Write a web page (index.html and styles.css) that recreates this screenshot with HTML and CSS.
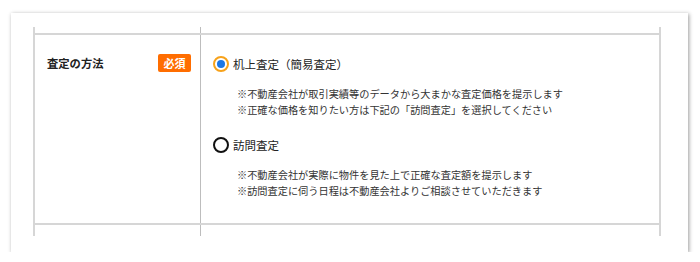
FILE: index.html
```html
<!DOCTYPE html>
<html lang="ja">
<head>
<meta charset="utf-8">
<link rel="stylesheet" href="styles.css">
</head>
<body>
<div class="card">
  <div class="table">
    <div class="row stub-top"><div class="cell-l"></div><div class="cell-r"></div></div>
    <div class="row main">
      <div class="cell-l label-cell">
        <span class="label">査定の方法</span>
        <span class="badge">必須</span>
      </div>
      <div class="cell-r content">
        <div class="option">
          <span class="radio checked"><span class="dot"></span></span>
          <span class="opt-text">机上査定（簡易査定）</span>
        </div>
        <div class="notes">
          <p>※不動産会社が取引実績等のデータから大まかな査定価格を提示します</p>
          <p>※正確な価格を知りたい方は下記の「訪問査定」を選択してください</p>
        </div>
        <div class="option second">
          <span class="radio"></span>
          <span class="opt-text">訪問査定</span>
        </div>
        <div class="notes">
          <p>※不動産会社が実際に物件を見た上で正確な査定額を提示します</p>
          <p>※訪問査定に伺う日程は不動産会社よりご相談させていただきます</p>
        </div>
      </div>
    </div>
    <div class="row stub-bottom"><div class="cell-l"></div><div class="cell-r"></div></div>
  </div>
</div>
</body>
</html>
```
FILE: styles.css
```css
* { box-sizing: border-box; }
html, body { margin: 0; padding: 0; background: #fff; }
body {
  font-family: "Noto Sans CJK JP", "Noto Sans", sans-serif;
  color: #333;
}
.card {
  margin: 13px 0 0 11px;
  width: 677px;
  height: 239px;
  background: #fff;
  box-shadow: 1px 1px 4px rgba(0,0,0,0.4);
  padding: 14px 27px 16px 22px;
}
.table {
  height: 209px;
  border-left: 2px solid #d6d6d6;
  border-right: 2px solid #d6d6d6;
  display: flex;
  flex-direction: column;
}
.row {
  display: grid;
  grid-template-columns: 165px 1fr;
}
.cell-r { border-left: 1px solid #bdbdbd; }
.stub-top { height: 6px; }
.stub-bottom { flex: 1; }
.main {
  border-top: 2px solid #d6d6d6;
  border-bottom: 2px solid #d6d6d6;
  height: 192px;
}
.label-cell {
  display: flex;
  justify-content: space-between;
  align-items: center;
  align-self: start;
  padding: 19px 9px 0 12px;
}
.label {
  font-size: 11.3px;
  font-weight: bold;
  color: #222;
  line-height: 18px;
}
.badge {
  width: 33px;
  height: 18px;
  background: #ff6d00;
  color: #fff;
  font-size: 11px;
  font-weight: bold;
  border-radius: 2px;
  display: flex;
  align-items: center;
  justify-content: center;
  line-height: 1;
}
.content {
  padding: 21px 0 0 12px;
}
.option {
  display: flex;
  align-items: center;
  gap: 4px;
  height: 16px;
}
.option.second { margin-top: 19px; }
.radio {
  width: 16px;
  height: 16px;
  border-radius: 50%;
  border: 2px solid #111;
  display: flex;
  align-items: center;
  justify-content: center;
  background: #fff;
}
.radio.checked { border-color: #f7a21b; }
.dot {
  width: 8px;
  height: 8px;
  border-radius: 50%;
  background: #1a76e6;
}
.opt-text {
  font-size: 11.5px;
  color: #222;
  line-height: 16px;
}
.notes {
  margin: 14px 0 0 24px;
}
.notes p {
  margin: 0;
  font-size: 10.2px;
  line-height: 16px;
  color: #333;
}
```
